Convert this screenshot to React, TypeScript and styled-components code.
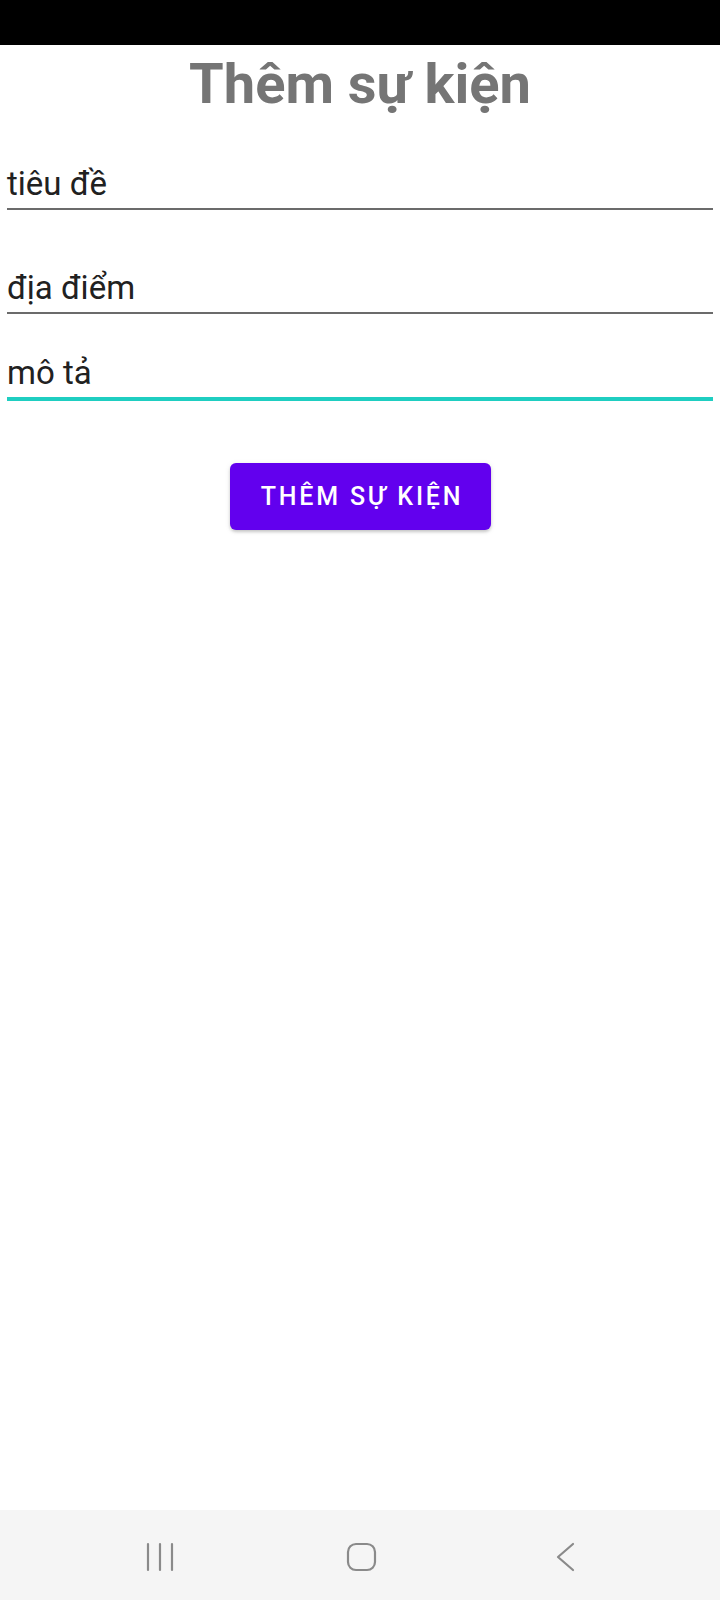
import styled, { createGlobalStyle } from "styled-components";

type FieldProps = {
  $gap: number;
  $active?: boolean;
};

const fields = [
  { label: "tiêu đề", gap: 48 },
  { label: "địa điểm", gap: 60 },
  { label: "mô tả", gap: 41, active: true },
];

const App = () => {
  return (
    <>
      <GlobalStyle />
      <Screen>
        <StatusBar />
        <Content>
          <Title>Thêm sự kiện</Title>
          {fields.map((f) => (
            <Field key={f.label} $gap={f.gap} $active={f.active}>
              {f.label}
            </Field>
          ))}
          <ButtonRow>
            <AddButton>THÊM SỰ KIỆN</AddButton>
          </ButtonRow>
        </Content>
        <NavBar>
          <NavIcon>
            <svg width="40" height="32" viewBox="0 0 40 32">
              <g stroke="#8a8a8a" strokeWidth="2.2" strokeLinecap="round">
                <line x1="8" y1="3" x2="8" y2="29" />
                <line x1="20" y1="3" x2="20" y2="29" />
                <line x1="32" y1="3" x2="32" y2="29" />
              </g>
            </svg>
          </NavIcon>
          <NavIcon>
            <svg width="40" height="32" viewBox="0 0 40 32">
              <rect
                x="6"
                y="3"
                width="27"
                height="26"
                rx="8"
                fill="none"
                stroke="#8a8a8a"
                strokeWidth="2.2"
              />
            </svg>
          </NavIcon>
          <NavIcon>
            <svg width="40" height="32" viewBox="0 0 40 32">
              <polyline
                points="29,3 14,16 29,29"
                fill="none"
                stroke="#8a8a8a"
                strokeWidth="2.2"
                strokeLinecap="round"
                strokeLinejoin="round"
              />
            </svg>
          </NavIcon>
        </NavBar>
      </Screen>
    </>
  );
};

export default App;

const GlobalStyle = createGlobalStyle`
  html, body {
    margin: 0;
    padding: 0;
    background: #fff;
  }
  body {
    font-family: Roboto, "Noto Sans", sans-serif;
  }
`;

const Screen = styled.div`
  display: flex;
  flex-direction: column;
  width: 720px;
  height: 1600px;
`;

const StatusBar = styled.div`
  height: 45px;
  background: #000;
`;

const Content = styled.div`
  flex: 1;
  display: flex;
  flex-direction: column;
  padding: 0 7px;
`;

const Title = styled.h1`
  margin: 5px 0 0;
  font-family: Roboto, sans-serif;
  font-weight: 700;
  font-size: 56px;
  line-height: 68px;
  color: #757575;
  text-align: center;
`;

const Field = styled.div<FieldProps>`
  margin-top: ${(p) => p.$gap}px;
  font-family: Roboto, sans-serif;
  font-size: 33px;
  line-height: 36px;
  color: #212121;
  padding-bottom: 6px;
  border-bottom: ${(p) => (p.$active ? "4px solid #1fcec1" : "2px solid #6b6b6b")};
`;

const ButtonRow = styled.div`
  display: flex;
  justify-content: center;
  margin-top: 62px;
`;

const AddButton = styled.button`
  width: 261px;
  height: 67px;
  border: none;
  border-radius: 6px;
  background: #6200ee;
  color: #fff;
  font-family: Roboto, sans-serif;
  font-weight: 500;
  font-size: 25px;
  letter-spacing: 2.8px;
  box-shadow: 0 2px 3px rgba(0, 0, 0, 0.18), 0 1px 6px rgba(0, 0, 0, 0.08);
  padding: 0 0 0 4px;
`;

const NavBar = styled.div`
  height: 90px;
  background: #f5f5f5;
  display: flex;
  align-items: center;
  justify-content: center;
  gap: 162px;
  padding: 4px 0 0 4px;
  box-sizing: border-box;
`;

const NavIcon = styled.div`
  width: 40px;
  height: 32px;
  display: flex;
`;
